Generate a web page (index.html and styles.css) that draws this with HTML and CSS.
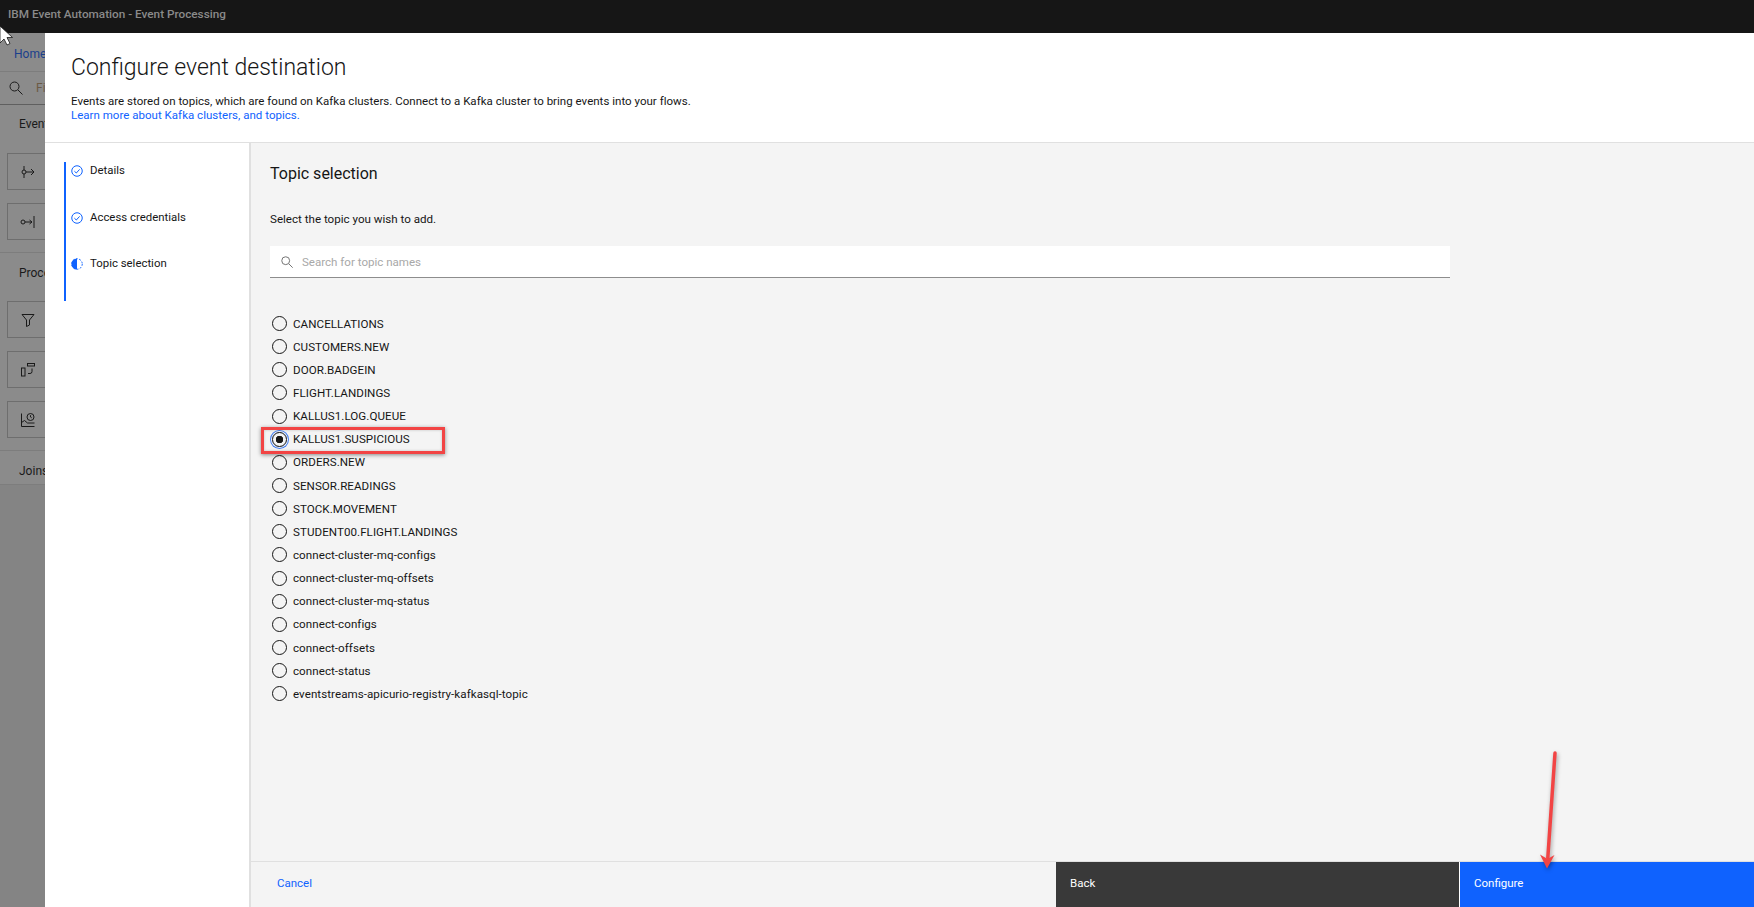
FILE: index.html
```html
<!DOCTYPE html>
<html lang="en">
<head>
<meta charset="utf-8">
<title>Configure event destination</title>
<link rel="stylesheet" href="styles.css">
</head>
<body>
<header class="topbar">IBM Event Automation - Event Processing</header>
<div class="workspace">
  <aside class="backdrop">
    <div class="crumb">Home</div>
    <div class="filter">
      <svg class="icon16" viewBox="0 0 16 16"><circle cx="6.500" cy="6.500" r="4.500"/><path d="M10 10l4.500 4.500"/></svg>
      <span>Filter</span>
    </div>
    <section class="group group-events">
      <div class="group-title">Events</div>
      <div class="tile"><svg class="icon16" viewBox="0 0 16 16"><circle cx="4" cy="8" r="2"/><path d="M4 2v4M4 10v4M6 8h8M11 5l3 3-3 3"/></svg></div>
      <div class="tile"><svg class="icon16" viewBox="0 0 16 16"><circle cx="3" cy="8" r="2"/><path d="M5 8h7M9.500 6l2.500 2-2.500 2M14 2v12"/></svg></div>
    </section>
    <section class="group group-processors">
      <div class="group-title">Processors</div>
      <div class="tile"><svg class="icon16" viewBox="0 0 16 16"><path d="M2 2.500h12L9.500 8v5l-3 1.500V8z"/></svg></div>
      <div class="tile"><svg class="icon16" viewBox="0 0 16 16"><rect x="1.500" y="6" width="3.500" height="8"/><rect x="7.500" y="1.500" width="7" height="2.500"/><path d="M12 6.500v3a2 2 0 0 1-2 2H8"/></svg></div>
      <div class="tile"><svg class="icon16" viewBox="0 0 16 16"><path d="M1.500 1.500v13h13M1.500 10.500l3-2 3 2.500h7"/><circle cx="10.500" cy="5" r="3.500"/><path d="M10.500 3.200V5l1.200.8"/></svg></div>
    </section>
    <section class="group group-last">
      <div class="group-title">Joins</div>
    </section>
  </aside>

  <main class="modal">
    <div class="modal-head">
      <h1>Configure event destination</h1>
      <p>Events are stored on topics, which are found on Kafka clusters. Connect to a Kafka cluster to bring events into your flows.<br><a href="#">Learn more about Kafka clusters, and topics.</a></p>
    </div>
    <div class="modal-body">
      <nav class="steps">
        <ol>
          <li><svg class="step-icon" viewBox="0 0 12 12"><circle cx="6" cy="6" r="5.250"/><path d="M3.400 6.200l1.900 1.800 3.300-3.600"/></svg>Details</li>
          <li><svg class="step-icon" viewBox="0 0 12 12"><circle cx="6" cy="6" r="5.250"/><path d="M3.400 6.200l1.900 1.800 3.300-3.600"/></svg>Access credentials</li>
          <li><svg class="step-icon" viewBox="0 0 12 12"><circle cx="6" cy="6" r="5.250" stroke-dasharray="1.800 1.500"/><path class="half" d="M6 .4a5.600 5.600 0 0 0 0 11.200z"/></svg>Topic selection</li>
        </ol>
      </nav>
      <div class="panel">
        <div class="panel-scroll">
          <h2>Topic selection</h2>
          <p class="hint">Select the topic you wish to add.</p>
          <div class="search">
            <svg class="search-icon" viewBox="0 0 16 16"><circle cx="6.500" cy="6.500" r="4.500"/><path d="M10 10l4.500 4.500"/></svg>
            <span>Search for topic names</span>
          </div>
          <ul class="topics">
            <li><i class="radio"></i>CANCELLATIONS</li>
            <li><i class="radio"></i>CUSTOMERS.NEW</li>
            <li><i class="radio"></i>DOOR.BADGEIN</li>
            <li><i class="radio"></i>FLIGHT.LANDINGS</li>
            <li><i class="radio"></i>KALLUS1.LOG.QUEUE</li>
            <li class="selected"><i class="radio on"></i>KALLUS1.SUSPICIOUS<b class="callout"></b></li>
            <li><i class="radio"></i>ORDERS.NEW</li>
            <li><i class="radio"></i>SENSOR.READINGS</li>
            <li><i class="radio"></i>STOCK.MOVEMENT</li>
            <li><i class="radio"></i>STUDENT00.FLIGHT.LANDINGS</li>
            <li><i class="radio"></i>connect-cluster-mq-configs</li>
            <li><i class="radio"></i>connect-cluster-mq-offsets</li>
            <li><i class="radio"></i>connect-cluster-mq-status</li>
            <li><i class="radio"></i>connect-configs</li>
            <li><i class="radio"></i>connect-offsets</li>
            <li><i class="radio"></i>connect-status</li>
            <li><i class="radio"></i>eventstreams-apicurio-registry-kafkasql-topic</li>
          </ul>
        </div>
        <footer class="actions">
          <a class="cancel" href="#">Cancel</a>
          <div class="btn btn-back">Back</div>
          <div class="btn btn-primary">Configure</div>
        </footer>
      </div>
    </div>
  </main>
</div>

<svg class="cursor" viewBox="0 0 14 20"><path d="M0 0v17l4-4 3 6 3-1.500-3-6h5.500z"/></svg>
<svg class="arrow" viewBox="0 0 30 130"><path class="arrow-line" d="M22 3L14.800 108"/><path class="arrow-head" d="M14 118.500L7 104.500l7.500 4.500 7-4z"/></svg>
</body>
</html>
```

FILE: styles.css
```css
* { box-sizing: border-box; }
html, body { margin: 0; height: 907px; overflow: hidden; }
body {
  position: relative;
  display: flex;
  flex-direction: column;
  font-family: Roboto, "Liberation Sans", sans-serif;
  color: #161616;
  background: #848484;
}
.topbar {
  height: 33px;
  flex: none;
  padding: 7px 0 0 8px;
  background: #161616;
  color: #8a8a8a;
  font-size: 11.750px;
  font-weight: 500;
  line-height: 14px;
}
.workspace { flex: 1; display: flex; min-height: 0; }

.backdrop {
  width: 45px;
  flex: none;
  overflow: hidden;
  white-space: nowrap;
  font-size: 12px;
  color: #1a1a1a;
}
.crumb {
  height: 39px;
  padding: 14px 0 0 14px;
  line-height: 15px;
  color: #1a3f8c;
  background: #8b8b8b;
  border-bottom: 1px solid #7d7d7d;
}
.filter {
  height: 33px;
  display: flex;
  align-items: center;
  gap: 12px;
  padding-left: 8px;
  background: #8b8b8b;
  border-bottom: 1px solid #5f5f5f;
  color: #6b5a45;
}
.group {
  padding: 11px 0 0 7px;
  background: #8b8b8b;
  border-bottom: 1px solid #7d7d7d;
}
.group-events { height: 148px; padding-top: 10px; }
.group-events .group-title { height: 38px; }
.group-processors { height: 198px; }
.group-last { height: 34px; }
.group-title { height: 37px; padding: 1px 0 0 12px; line-height: 16px; }
.tile {
  width: 60px;
  height: 37px;
  margin-bottom: 13px;
  padding: 10px 0 0 12px;
  border: 1px solid #6e6e6e;
}
.icon16 { width: 16px; height: 16px; fill: none; stroke: #1a1a1a; stroke-width: 1; flex: none; display: block; }

.modal {
  flex: 1;
  min-width: 0;
  display: flex;
  flex-direction: column;
  background: #fff;
}
.modal-head {
  height: 110px;
  flex: none;
  padding: 20px 26px 0;
  border-bottom: 1px solid #e0e0e0;
}
h1 {
  margin: 0;
  font-size: 23px;
  font-weight: 300;
  line-height: 30px;
}
.modal-head p {
  margin: 11px 0 0;
  font-size: 11.500px;
  letter-spacing: .02px;
  line-height: 14px;
}
a { color: #0f62fe; text-decoration: none; }
.modal-body { flex: 1; display: flex; min-height: 0; }

.steps { width: 206px; flex: none; padding-top: 19px; border-right: 2px solid #e0e0e0; }
.steps ol {
  list-style: none;
  margin: 0 0 0 19px;
  padding: 0;
  height: 139px;
  border-left: 2px solid #0f62fe;
}
.steps li {
  height: 46.500px;
  display: flex;
  gap: 7px;
  padding: 0 0 0 5px;
  font-size: 11.400px;
  line-height: 16px;
}
.step-icon { width: 12px; height: 12px; margin-top: 3px; fill: none; stroke: #0f62fe; stroke-width: 1; flex: none; }
.step-icon .half { fill: #0f62fe; stroke: none; }

.panel { flex: 1; min-width: 0; display: flex; flex-direction: column; background: #f4f4f4; }
.panel-scroll { flex: 1; min-height: 0; padding: 21px 19px 0; }
h2 {
  margin: 0;
  font-size: 16px;
  font-weight: 400;
  line-height: 20px;
}
.hint { margin: 28px 0 0; font-size: 11.600px; line-height: 14px; }
.search {
  width: 1180px;
  height: 32px;
  margin-top: 20px;
  display: flex;
  align-items: center;
  gap: 8px;
  padding-left: 10px;
  background: #fff;
  border-bottom: 1px solid #8d8d8d;
  font-size: 11.550px;
  color: #a8a8a8;
}
.search-icon { width: 14px; height: 14px; fill: none; stroke: #6f6f6f; stroke-width: 1.100; flex: none; }
.topics { list-style: none; margin: 34px 0 0; padding: 0; }
.topics li {
  position: relative;
  height: 23.150px;
  display: flex;
  align-items: center;
  gap: 6px;
  padding-left: 2px;
  font-size: 11.600px;
  letter-spacing: .05px;
}
.radio {
  width: 15px;
  height: 15px;
  flex: none;
  border: 1px solid #161616;
  border-radius: 50%;
}
.radio.on {
  background: radial-gradient(circle, #161616 0 3.500px, transparent 4px);
  box-shadow: 0 0 0 1px #f4f4f4, 0 0 0 2px #3f7bf0;
}
.callout {
  position: absolute;
  left: -9px;
  top: -1px;
  width: 184px;
  height: 27px;
  border: 3px solid #f24444;
  box-shadow: 0 1px 4px rgba(0, 0, 0, .45), inset 0 0 3px rgba(0, 0, 0, .2);
}

.actions { height: 46px; flex: none; display: flex; border-top: 1px solid #e0e0e0; font-size: 11.500px; }
.cancel { width: 805px; padding: 13px 0 0 26px; line-height: 16px; }
.btn { padding: 13px 14px 0; line-height: 16px; color: #fff; }
.btn-back { width: 403px; background: #393939; }
.btn-primary { flex: 1; background: #0f62fe; border-left: 1px solid #fff; }

.cursor {
  position: absolute;
  left: 0;
  top: 26px;
  width: 14px;
  height: 20px;
  fill: #fff;
  stroke: #161616;
  stroke-width: .8;
}
.arrow {
  position: absolute;
  left: 1533px;
  top: 750px;
  width: 30px;
  height: 130px;
  filter: drop-shadow(1px 2px 2px rgba(0, 0, 0, .35));
}
.arrow-line { fill: none; stroke: #f24444; stroke-width: 3.500; stroke-linecap: round; }
.arrow-head { fill: #f24444; }
```
